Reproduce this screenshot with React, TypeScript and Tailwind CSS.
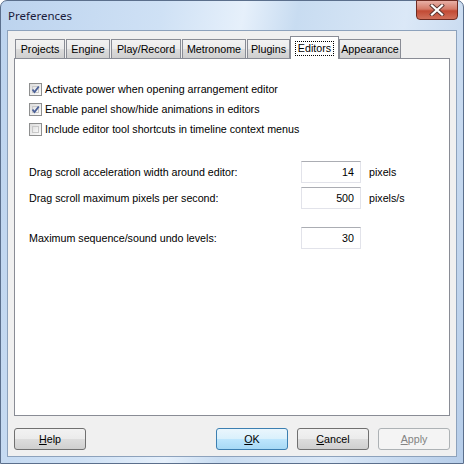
import React from 'react';

const font = { fontFamily: '"Liberation Sans", Arial, sans-serif' };

const tabs = [
  { name: 'Projects', w: 'w-[50px]' },
  { name: 'Engine', w: 'w-[44px]' },
  { name: 'Play/Record', w: 'w-[70px]' },
  { name: 'Metronome', w: 'w-[64px]' },
  { name: 'Plugins', w: 'w-[43px]' },
  { name: 'Editors', w: 'w-[49px]' },
  { name: 'Appearance', w: 'w-[62px]' },
];

function Check({ checked, label }: { checked: boolean; label: string }) {
  return (
    <div className="flex items-center h-[20px]">
      <div className="w-[13px] h-[13px] border border-[#8e8f8f] bg-[linear-gradient(135deg,#dcdcdc,#fcfcfc)] p-[2px] flex">
        <div className="flex-1 bg-[linear-gradient(135deg,#e2e2e2,#f8f8f8)] border border-[#c8c8c8] flex items-center justify-center">
          {checked && (
            <svg width="9" height="9" viewBox="0 0 9 9" className="-m-[2px]">
              <path d="M1.5 4.5 L3.5 7 L7.8 1.5" fill="none" stroke="#4a5f97" strokeWidth="1.8" />
            </svg>
          )}
        </div>
      </div>
      <span className="ml-[3px]">{label}</span>
    </div>
  );
}

function Field({ label, value, unit }: { label: string; value: string; unit?: string }) {
  return (
    <div className="flex items-center">
      <div className="w-[272px]">{label}</div>
      <div className="w-[60px] h-[22px] border border-[#e2e3ea] border-t-[#abadb3] bg-white flex items-center justify-end pr-[6px]">
        {value}
      </div>
      {unit && <span className="ml-[8px]">{unit}</span>}
    </div>
  );
}

function Btn({ children, kind }: { children: React.ReactNode; kind?: 'default' | 'disabled' }) {
  const cls =
    kind === 'default'
      ? 'border-[#3c7fb1] bg-[linear-gradient(#eaf6fd,#d9f0fc_50%,#bee6fd_50%,#a7d9f5)] text-black'
      : kind === 'disabled'
      ? 'border-[#adb2b5] bg-[#f4f4f4] text-[#838383]'
      : 'border-[#707070] bg-[linear-gradient(#f2f2f2,#ebebeb_50%,#dddddd_50%,#cfcfcf)] text-black';
  return (
    <div className={`w-[72px] h-[22px] rounded-[3px] border flex items-center justify-center ${cls}`}>
      {children}
    </div>
  );
}

export default function App() {
  return (
    <div className="w-[466px] h-[465px] bg-white" style={font}>
      <div className="w-[464px] h-[464px] rounded-t-[7px] border border-[#5b6f8c] bg-[linear-gradient(100deg,#bcd3ee,#cfe1f5_30%,#e6f0fb_45%,#c8dcf1_55%,#dbe8f7_75%,#b6cde9)] flex flex-col">
        {/* title bar */}
        <div className="h-[29px] flex items-start relative">
          <div className="ml-[7px] mt-[6px] text-[11.5px] text-[#1a1a3a]" style={{ fontFamily: '"Noto Sans", "Open Sans", sans-serif' }}>
            Preferences
          </div>
          <div className="absolute right-[5px] top-[-1px] w-[42px] h-[20px] rounded-b-[4px] border border-[#6d2b22] bg-[linear-gradient(#e8b0a6,#d47a68_45%,#c24a34_55%,#d0705b)] flex items-center justify-center">
            <svg width="16" height="12" viewBox="0 0 16 12">
              <path d="M3 1.5 L13 10.5 M13 1.5 L3 10.5" stroke="#5a3530" strokeWidth="4" strokeLinecap="square" />
              <path d="M3 1.5 L13 10.5 M13 1.5 L3 10.5" stroke="#ffffff" strokeWidth="2.2" strokeLinecap="square" />
            </svg>
          </div>
        </div>

        {/* client area */}
        <div className="mx-[6px] mb-[6px] flex-1 bg-[#f0f0f0] border border-[#8da2bc] flex flex-col text-[10.7px] text-black px-[6px] pt-[5px]">
          {/* tabs */}
          <div className="flex items-end h-[22px] pl-[1px] relative z-10">
            {tabs.map((t) =>
              t.name === 'Editors' ? (
                <div key={t.name} className={`${t.w} h-[23px] -ml-[1px] mb-[-1px] bg-white border border-[#898c95] border-b-0 flex items-center justify-center`}>
                  <span className="px-[2px] border border-dotted border-black leading-[13px]">{t.name}</span>
                </div>
              ) : (
                <div key={t.name} className={`${t.w} h-[19px] mr-[1px] border border-[#898c95] border-b-0 bg-[linear-gradient(#f2f2f2,#ebebeb_50%,#dddddd_50%,#cfcfcf)] flex items-center justify-center`}>
                  {t.name}
                </div>
              )
            )}
          </div>

          {/* panel */}
          <div className="h-[358px] w-[436px] bg-white border border-[#898c95] pl-[14px] pt-[20px]">
            <Check checked label="Activate power when opening arrangement editor" />
            <Check checked label="Enable panel show/hide animations in editors" />
            <Check checked={false} label="Include editor tool shortcuts in timeline context menus" />

            <div className="mt-[22px] flex flex-col gap-[4px]">
              <Field label="Drag scroll acceleration width around editor:" value="14" unit="pixels" />
              <Field label="Drag scroll maximum pixels per second:" value="500" unit="pixels/s" />
            </div>
            <div className="mt-[18px]">
              <Field label="Maximum sequence/sound undo levels:" value="30" />
            </div>
          </div>

          {/* buttons */}
          <div className="flex items-center mt-[12px]">
            <Btn>
              <span><u>H</u>elp</span>
            </Btn>
            <div className="flex-1" />
            <div className="flex gap-[9px]">
              <Btn kind="default">
                <span><u>O</u>K</span>
              </Btn>
              <Btn>
                <span><u>C</u>ancel</span>
              </Btn>
              <Btn kind="disabled">
                <span><u>A</u>pply</span>
              </Btn>
            </div>
          </div>
        </div>
      </div>
    </div>
  );
}
